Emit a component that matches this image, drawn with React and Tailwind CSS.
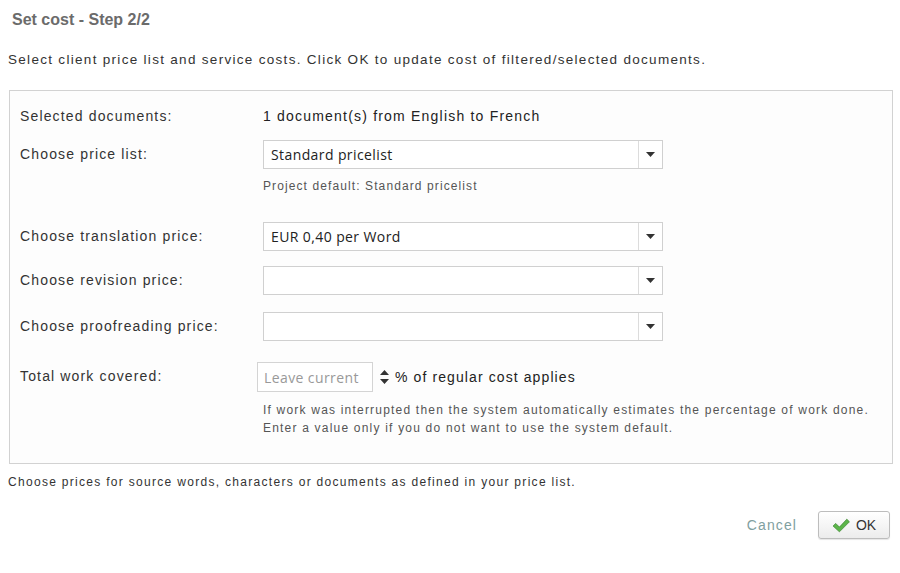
import React from "react";

const Caret = () => (
    <svg width="9" height="5" viewBox="0 0 9 5">
        <path d="M0 0h9L4.5 5z" fill="#333" />
    </svg>
);

// one dropdown field, the value is optional
const Select = ({ value }) => (
    <div className="flex h-[29px] w-[400px] border border-[#d0d0d0] bg-white">
        <div className="flex flex-1 items-center pl-[7px] text-[14px] tracking-[0.4px] text-[#222]" style={{ fontFamily: '"Open Sans", "Noto Sans", sans-serif' }}>
            {value}
        </div>
        <div className="flex w-[24px] items-center justify-center border-l border-[#dcdcdc]">
            <Caret />
        </div>
    </div>
);

const Row = ({ label, children, className = "", labelClass = "" }) => (
    <div className={`flex ${className}`}>
        <div className={`w-[243px] shrink-0 text-[14px] tracking-[1.15px] text-[#333] ${labelClass}`}>{label}</div>
        <div className="flex-1">{children}</div>
    </div>
);

export default function App() {
    return (
        <div className="h-[573px] w-[900px] overflow-hidden bg-white" style={{ fontFamily: '"Liberation Sans", Arial, sans-serif' }}>
            {/* Header */}
            <div className="pl-[12px] pt-[8px] text-[16px] font-bold text-[#6b6b6b]">Set cost - Step 2/2</div>
            <div className="mt-[18px] pl-[8px] text-[13.5px] tracking-[1.3px] text-[#333]">
                Select client price list and service costs. Click OK to update cost of filtered/selected documents.
            </div>

            {/* Form box */}
            <div className="ml-[9px] mr-[7px] mt-[20px] h-[374px] border border-[#d2d2d2] bg-[#fdfdfd] pl-[10px] pt-[15px]">
                <Row label="Selected documents:" className="items-center">
                    <div className="text-[14px] tracking-[1.2px] text-[#222]">1 document(s) from English to French</div>
                </Row>

                <Row label="Choose price list:" className="mt-[13px]" labelClass="pt-[4px]">
                    <Select value="Standard pricelist" />
                    <div className="mt-[8px] text-[12px] tracking-[1.1px] text-[#555]">Project default: Standard pricelist</div>
                </Row>

                <Row label="Choose translation price:" className="mt-[27px] items-center">
                    <Select value="EUR 0,40 per Word" />
                </Row>

                <Row label="Choose revision price:" className="mt-[15px] items-center">
                    <Select />
                </Row>

                <Row label="Choose proofreading price:" className="mt-[17px] items-center">
                    <Select />
                </Row>

                <Row label="Total work covered:" className="mt-[21px]" labelClass="pt-[4px]">
                    <div className="flex items-center">
                        <div className="-ml-[6px] flex h-[30px] w-[116px] items-center border border-[#d4d4d4] bg-white pl-[6px] text-[14px] tracking-[0.4px] text-[#999]" style={{ fontFamily: '"Open Sans", "Noto Sans", sans-serif' }}>
                            Leave current
                        </div>
                        <svg width="9" height="14" viewBox="0 0 9 14" className="ml-[7px]">
                            <path d="M4.5 0L9 5H0z M0 9h9L4.5 14z" fill="#333" />
                        </svg>
                        <span className="ml-[6px] text-[14px] tracking-[1.1px] text-[#222]">% of regular cost applies</span>
                    </div>
                    <div className="mt-[9px] text-[12px] leading-[18px] tracking-[1.2px] text-[#555]">
                        If work was interrupted then the system automatically estimates the percentage of work done.
                        <br />
                        Enter a value only if you do not want to use the system default.
                    </div>
                </Row>
            </div>

            {/* Footer */}
            <div className="mt-[9px] pl-[8px] text-[12px] tracking-[1.3px] text-[#333]">
                Choose prices for source words, characters or documents as defined in your price list.
            </div>

            <div className="mr-[10px] mt-[20px] flex items-center justify-end gap-[21px]">
                <span className="text-[14px] tracking-[1.1px] text-[#7fa0a0]">Cancel</span>
                <button className="flex h-[28px] w-[72px] items-center justify-center gap-[6px] rounded-[3px] border border-[#bdbdbd] bg-gradient-to-b from-white to-[#ececec] text-[14px] text-[#333] shadow-[0_1px_1px_rgba(0,0,0,0.1)]">
                    <svg width="18" height="15" viewBox="0 0 17 14">
                        <path d="M1 7.5l2.5-2.5 3.5 3.5L14 1l2.5 2.5L7 13z" fill="#5cb54a" stroke="#2f7d24" strokeWidth="0.6" />
                    </svg>
                    OK
                </button>
            </div>
        </div>
    );
}
